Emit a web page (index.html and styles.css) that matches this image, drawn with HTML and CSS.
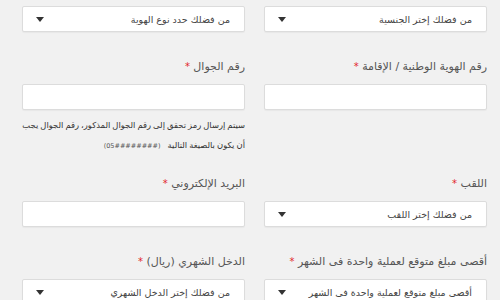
FILE: index.html
```html
<!DOCTYPE html>
<html lang="ar" dir="rtl">
<head>
  <meta charset="UTF-8" />
  <meta name="viewport" content="width=device-width, initial-scale=1.0" />
  <title>تسجيل</title>
  <link rel="stylesheet" href="styles.css">
</head>
<body>
  <form class="reg-form">
    <div class="field">
      <div class="select-box">
        <span>من فضلك إختر الجنسية</span>
        <i class="caret"></i>
      </div>
    </div>
    <div class="field">
      <div class="select-box">
        <span>من فضلك حدد نوع الهوية</span>
        <i class="caret"></i>
      </div>
    </div>

    <div class="field">
      <label>رقم الهوية الوطنية / الإقامة <em>*</em></label>
      <input type="text" class="text-box">
    </div>
    <div class="field">
      <label>رقم الجوال <em>*</em></label>
      <input type="text" class="text-box">
      <p class="hint"><span class="keep">سيتم إرسال رمز تحقق إلى رقم الجوال المذكور، رقم الجوال يجب</span> أن يكون بالصيغة التالية <bdi class="format" dir="ltr">(05########)</bdi></p>
    </div>

    <div class="field">
      <label>اللقب <em>*</em></label>
      <div class="select-box">
        <span>من فضلك إختر اللقب</span>
        <i class="caret"></i>
      </div>
    </div>
    <div class="field">
      <label>البريد الإلكتروني <em>*</em></label>
      <input type="email" class="text-box">
    </div>

    <div class="field">
      <label>أقصى مبلغ متوقع لعملية واحدة فى الشهر <em>*</em></label>
      <div class="select-box">
        <span>أقصى مبلغ متوقع لعملية واحدة فى الشهر</span>
        <i class="caret"></i>
      </div>
    </div>
    <div class="field">
      <label>الدخل الشهري (ريال) <em>*</em></label>
      <div class="select-box">
        <span>من فضلك إختر الدخل الشهري</span>
        <i class="caret"></i>
      </div>
    </div>
  </form>
</body>
</html>
```

FILE: styles.css
```css
* {
  margin: 0;
  padding: 0;
  box-sizing: border-box;
  font-family: 'DejaVu Sans', sans-serif;
}

body {
  background: #f1f1f1;
  overflow: hidden;
}

.reg-form {
  display: grid;
  grid-template-columns: 223px 223px;
  column-gap: 19px;
  padding: 6px 13px 0 22px;
}

.field {
  display: flex;
  flex-direction: column;
  margin-bottom: 25px;
}

.field label {
  font-size: 11px;
  line-height: 20px;
  color: #555;
  margin-bottom: 7px;
}

.field label em {
  font-style: normal;
  color: #e2262b;
  font-size: 10px;
}

.select-box,
.text-box {
  height: 26px;
  width: 100%;
  background: #fff;
  border: 1px solid #dcdcdc;
  border-radius: 2px;
  box-shadow: 0 1px 1px rgba(0, 0, 0, 0.04);
}

.text-box {
  outline: none;
}

.select-box {
  display: flex;
  align-items: center;
  justify-content: space-between;
  padding: 0 14px 0 13px;
  font-size: 9.5px;
  color: #444;
}

.caret {
  width: 0;
  height: 0;
  border-left: 4.5px solid transparent;
  border-right: 4.5px solid transparent;
  border-top: 5px solid #333;
}

.hint {
  font-size: 8.4px;
  line-height: 20px;
  word-spacing: -0.6px;
  color: #333;
  margin: 5px 0 -7px;
}

.hint .keep {
  white-space: nowrap;
}

.hint .format {
  font-size: 6.5px;
  word-spacing: 0;
  color: #555;
  margin-right: 5px;
}
```
